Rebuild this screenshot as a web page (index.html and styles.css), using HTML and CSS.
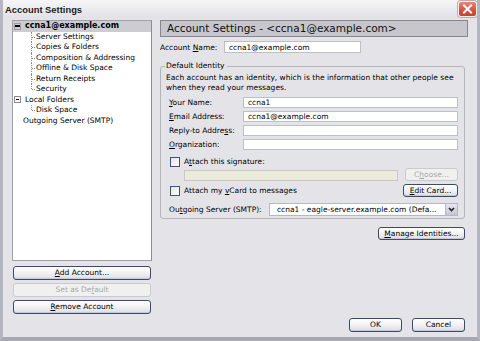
FILE: index.html
```html
<!DOCTYPE html>
<html lang="en">
<head>
    <meta charset="UTF-8">
    <title>Account Settings</title>
    <link rel="stylesheet" href="styles.css">
</head>
<body>
    <div class="window">
        <div class="titlebar">
            <span class="title">Account Settings</span>
            <span class="close">
                <svg viewBox="0 0 17 14" width="17" height="14">
                    <path d="M5 3.5 L12 10.5 M12 3.5 L5 10.5" stroke="#fff" stroke-width="2" stroke-linecap="square"/>
                </svg>
            </span>
        </div>

        <div class="main">
            <!-- Account tree and its buttons -->
            <div class="sidebar">
                <div class="tree">
                    <div class="node selected"><span class="exp"></span><b>ccna1@example.com</b></div>
                    <div class="children">
                        <div class="leaf">Server Settings</div>
                        <div class="leaf">Copies &amp; Folders</div>
                        <div class="leaf">Composition &amp; Addressing</div>
                        <div class="leaf">Offline &amp; Disk Space</div>
                        <div class="leaf">Return Receipts</div>
                        <div class="leaf">Security</div>
                    </div>
                    <div class="node"><span class="exp"></span>Local Folders</div>
                    <div class="children">
                        <div class="leaf">Disk Space</div>
                    </div>
                    <div class="node">Outgoing Server (SMTP)</div>
                </div>
                <button class="btn side-btn"><u>A</u>dd Account...</button>
                <button class="btn side-btn" disabled>Set as De<u>f</u>ault</button>
                <button class="btn side-btn"><u>R</u>emove Account</button>
            </div>

            <!-- Settings pane -->
            <div class="pane">
                <div class="pane-header">Account Settings - &lt;ccna1@example.com&gt;</div>

                <div class="acct-row">
                    <label class="acct-label">Account <u>N</u>ame:</label>
                    <input class="field acct-field" type="text" value="ccna1@example.com">
                </div>

                <fieldset class="group">
                    <legend>Default Identity</legend>
                    <p class="desc">Each account has an identity, which is the information that other people see<br>when they read your messages.</p>

                    <div class="form">
                        <label><u>Y</u>our Name:</label>
                        <input class="field" type="text" value="ccna1">
                        <label><u>E</u>mail Address:</label>
                        <input class="field" type="text" value="ccna1@example.com">
                        <label>Reply-to Addre<u>s</u>s:</label>
                        <input class="field" type="text">
                        <label><u>O</u>rganization:</label>
                        <input class="field" type="text">
                    </div>

                    <div class="check-row sig-row">
                        <span class="checkbox"></span>
                        <span>A<u>t</u>tach this signature:</span>
                    </div>
                    <div class="file-row">
                        <span class="file-field"></span>
                        <button class="btn choose-btn" disabled>C<u>h</u>oose...</button>
                    </div>
                    <div class="check-row vcard-row">
                        <span class="checkbox"></span>
                        <span class="grow">Attach my <u>v</u>Card to messages</span>
                        <button class="btn card-btn"><u>E</u>dit Card...</button>
                    </div>

                    <div class="smtp-row">
                        <label class="smtp-label">Ou<u>t</u>going Server (SMTP):</label>
                        <div class="select">
                            <span class="select-text">ccna1 - eagle-server.example.com (Defa...</span>
                            <span class="select-arrow">
                                <svg viewBox="0 0 9 9" width="9" height="9">
                                    <path d="M2 3 L4.5 5.5 L7 3" fill="none" stroke="#222" stroke-width="1.6"/>
                                </svg>
                            </span>
                        </div>
                    </div>
                </fieldset>

                <div class="manage-row">
                    <button class="btn manage-btn"><u>M</u>anage Identities...</button>
                </div>
            </div>
        </div>

        <div class="footer">
            <button class="btn dlg-btn">OK</button>
            <button class="btn dlg-btn">Cancel</button>
        </div>
    </div>
</body>
</html>
```

FILE: styles.css
```css
body {
    margin: 0;
    background: #e4e4e8;
}

.window {
    width: 480px;
    height: 341px;
    box-sizing: border-box;
    background: #e4e4e8;
    border-left: 3px solid #b6b6c2;
    border-right: 3px solid #b6b6c2;
    border-bottom: 4px solid #a8a8b2;
    font-family: "DejaVu Sans", sans-serif;
    font-size: 7.5px;
    color: #000;
    overflow: hidden;
}

u {
    text-decoration-thickness: 1px;
    text-underline-offset: 1px;
}

/* Title bar */
.titlebar {
    height: 18px;
    display: flex;
    align-items: center;
    justify-content: space-between;
    padding: 0 0 0 2px;
    background: linear-gradient(#f6f6f8, #e2e2e6);
}

.title {
    font-family: "Liberation Sans", Arial, sans-serif;
    font-weight: bold;
    font-size: 9.4px;
    color: #1c1c1c;
}

.close {
    width: 17px;
    height: 14px;
    display: flex;
    border: 1px solid #f4f0f0;
    border-radius: 3px;
    background: linear-gradient(#e88878, #d2503e 60%, #c44434);
    box-shadow: 0 0 0 1px #c8a8a8;
    margin-right: 0;
}

/* Main area */
.main {
    height: 296px;
    display: flex;
    padding: 2px 0 0 9px;
    box-sizing: border-box;
}

.sidebar {
    width: 140px;
    display: flex;
    flex-direction: column;
    gap: 3px;
}

.tree {
    height: 242px;
    box-sizing: border-box;
    border: 1px solid #a0a0aa;
    border-right-color: #8c8c96;
    background: #fff;
    margin-bottom: 2px;
}

.node,
.leaf {
    height: 10.5px;
    line-height: 10.5px;
    white-space: nowrap;
    display: flex;
    align-items: center;
}

.node {
    padding-left: 10px;
}

.node.selected {
    background: #ccccd2;
}

.node b {
    font-size: 8px;
}

.exp {
    width: 5px;
    height: 5px;
    margin-left: -9px;
    margin-right: 4px;
    border: 1px solid #8a8a98;
    background: linear-gradient(#000, #000) center / 3px 1px no-repeat, #fff;
}

.selected .exp {
    border-color: #9a9aa8;
    background: linear-gradient(#000, #000) center / 5px 2px no-repeat, #ccccd2;
}

.leaf {
    position: relative;
    padding-left: 23px;
}

.leaf::before {
    content: "";
    position: absolute;
    left: 18px;
    top: 0;
    bottom: 0;
    border-left: 1px dotted #8a8a8a;
}

.leaf:last-child::before {
    bottom: 50%;
}

.leaf::after {
    content: "";
    position: absolute;
    left: 19px;
    top: 50%;
    width: 3px;
    border-top: 1px dotted #8a8a8a;
}

/* Buttons */
.btn {
    font-family: inherit;
    font-size: 7.5px;
    color: #000;
    height: 14px;
    padding: 0;
    border: 1px solid #3c4c66;
    border-radius: 3px;
    background: linear-gradient(#ffffff, #f2f2f4 50%, #dcdce4);
    box-shadow: inset 0 -1px 0 #c8c8d4;
    line-height: 12px;
}

.btn:disabled {
    color: #a8a8a8;
    border-color: #cacace;
    background: #f0f0ee;
    box-shadow: none;
}

.side-btn {
    width: 138px;
    margin-left: 1px;
}

/* Right pane */
.pane {
    width: 308px;
    margin-left: 8px;
}

.pane-header {
    height: 17px;
    box-sizing: border-box;
    border: 1px solid #86868e;
    background: #c6c6cc;
    padding-left: 6px;
    font-size: 10.5px;
    line-height: 15px;
    white-space: nowrap;
    color: #111;
}

.acct-row {
    display: flex;
    align-items: center;
    margin-top: 4px;
}

.acct-label {
    width: 64px;
}

.field {
    height: 11px;
    box-sizing: border-box;
    border: 1px solid #bcc0c8;
    background: #fff;
    font-family: inherit;
    font-size: 7.5px;
    padding: 0 0 0 4px;
    margin: 0;
    outline: none;
}

.acct-field {
    width: 137px;
    height: 12px;
}

.group {
    margin: 8px 3px 0 0;
    padding: 0 6px 2px 5px;
    border: 1px solid #b4b4bc;
    border-radius: 3px;
}

.group legend {
    padding: 0 2px 0 1px;
    margin-left: -1px;
    line-height: 10px;
}

.desc {
    margin: 2px 0 0;
    line-height: 10px;
    white-space: nowrap;
}

.form {
    display: grid;
    grid-template-columns: 74px 1fr;
    row-gap: 3px;
    align-items: center;
    margin: 4px 0 0 3px;
}

.check-row {
    display: flex;
    align-items: center;
    gap: 4px;
    margin-left: 4px;
}

.sig-row {
    height: 11px;
    margin-top: 6px;
}

.checkbox {
    width: 10px;
    height: 10px;
    box-sizing: border-box;
    border: 1px solid #3a5476;
    background: linear-gradient(135deg, #e4e4ea, #ffffff);
}

.file-row {
    display: flex;
    align-items: flex-end;
    margin: 1px 0 0 18px;
}

.file-field {
    width: 214px;
    height: 11px;
    box-sizing: border-box;
    border: 1px solid #c8c8c0;
    background: #ebebdc;
}

.choose-btn {
    width: 53px;
    height: 13px;
    margin-left: 7px;
}

.vcard-row {
    margin-top: 3px;
}

.grow {
    flex: 1;
}

.card-btn {
    width: 55px;
    height: 13px;
}

.smtp-row {
    display: flex;
    align-items: center;
    margin: 6px 0 0 3px;
}

.smtp-label {
    width: 100px;
}

.select {
    flex: 1;
    height: 13px;
    box-sizing: border-box;
    border: 1px solid #b4b8c4;
    background: #fff;
    display: flex;
    align-items: center;
    padding-left: 7px;
}

.select-text {
    flex: 1;
    white-space: nowrap;
    overflow: hidden;
}

.select-arrow {
    width: 11px;
    height: 11px;
    display: flex;
    align-items: center;
    justify-content: center;
    background: linear-gradient(#e8e8f2, #c4c4d6);
    border-left: 1px solid #b8b8c8;
}

.manage-row {
    display: flex;
    justify-content: flex-end;
    margin: 8px 3px 0 0;
}

.manage-btn {
    width: 87px;
    height: 13px;
}

/* Dialog buttons */
.footer {
    display: flex;
    justify-content: flex-end;
    gap: 10px;
    padding: 4px 12px 0 0;
}

.dlg-btn {
    width: 53px;
    height: 14px;
}
```
